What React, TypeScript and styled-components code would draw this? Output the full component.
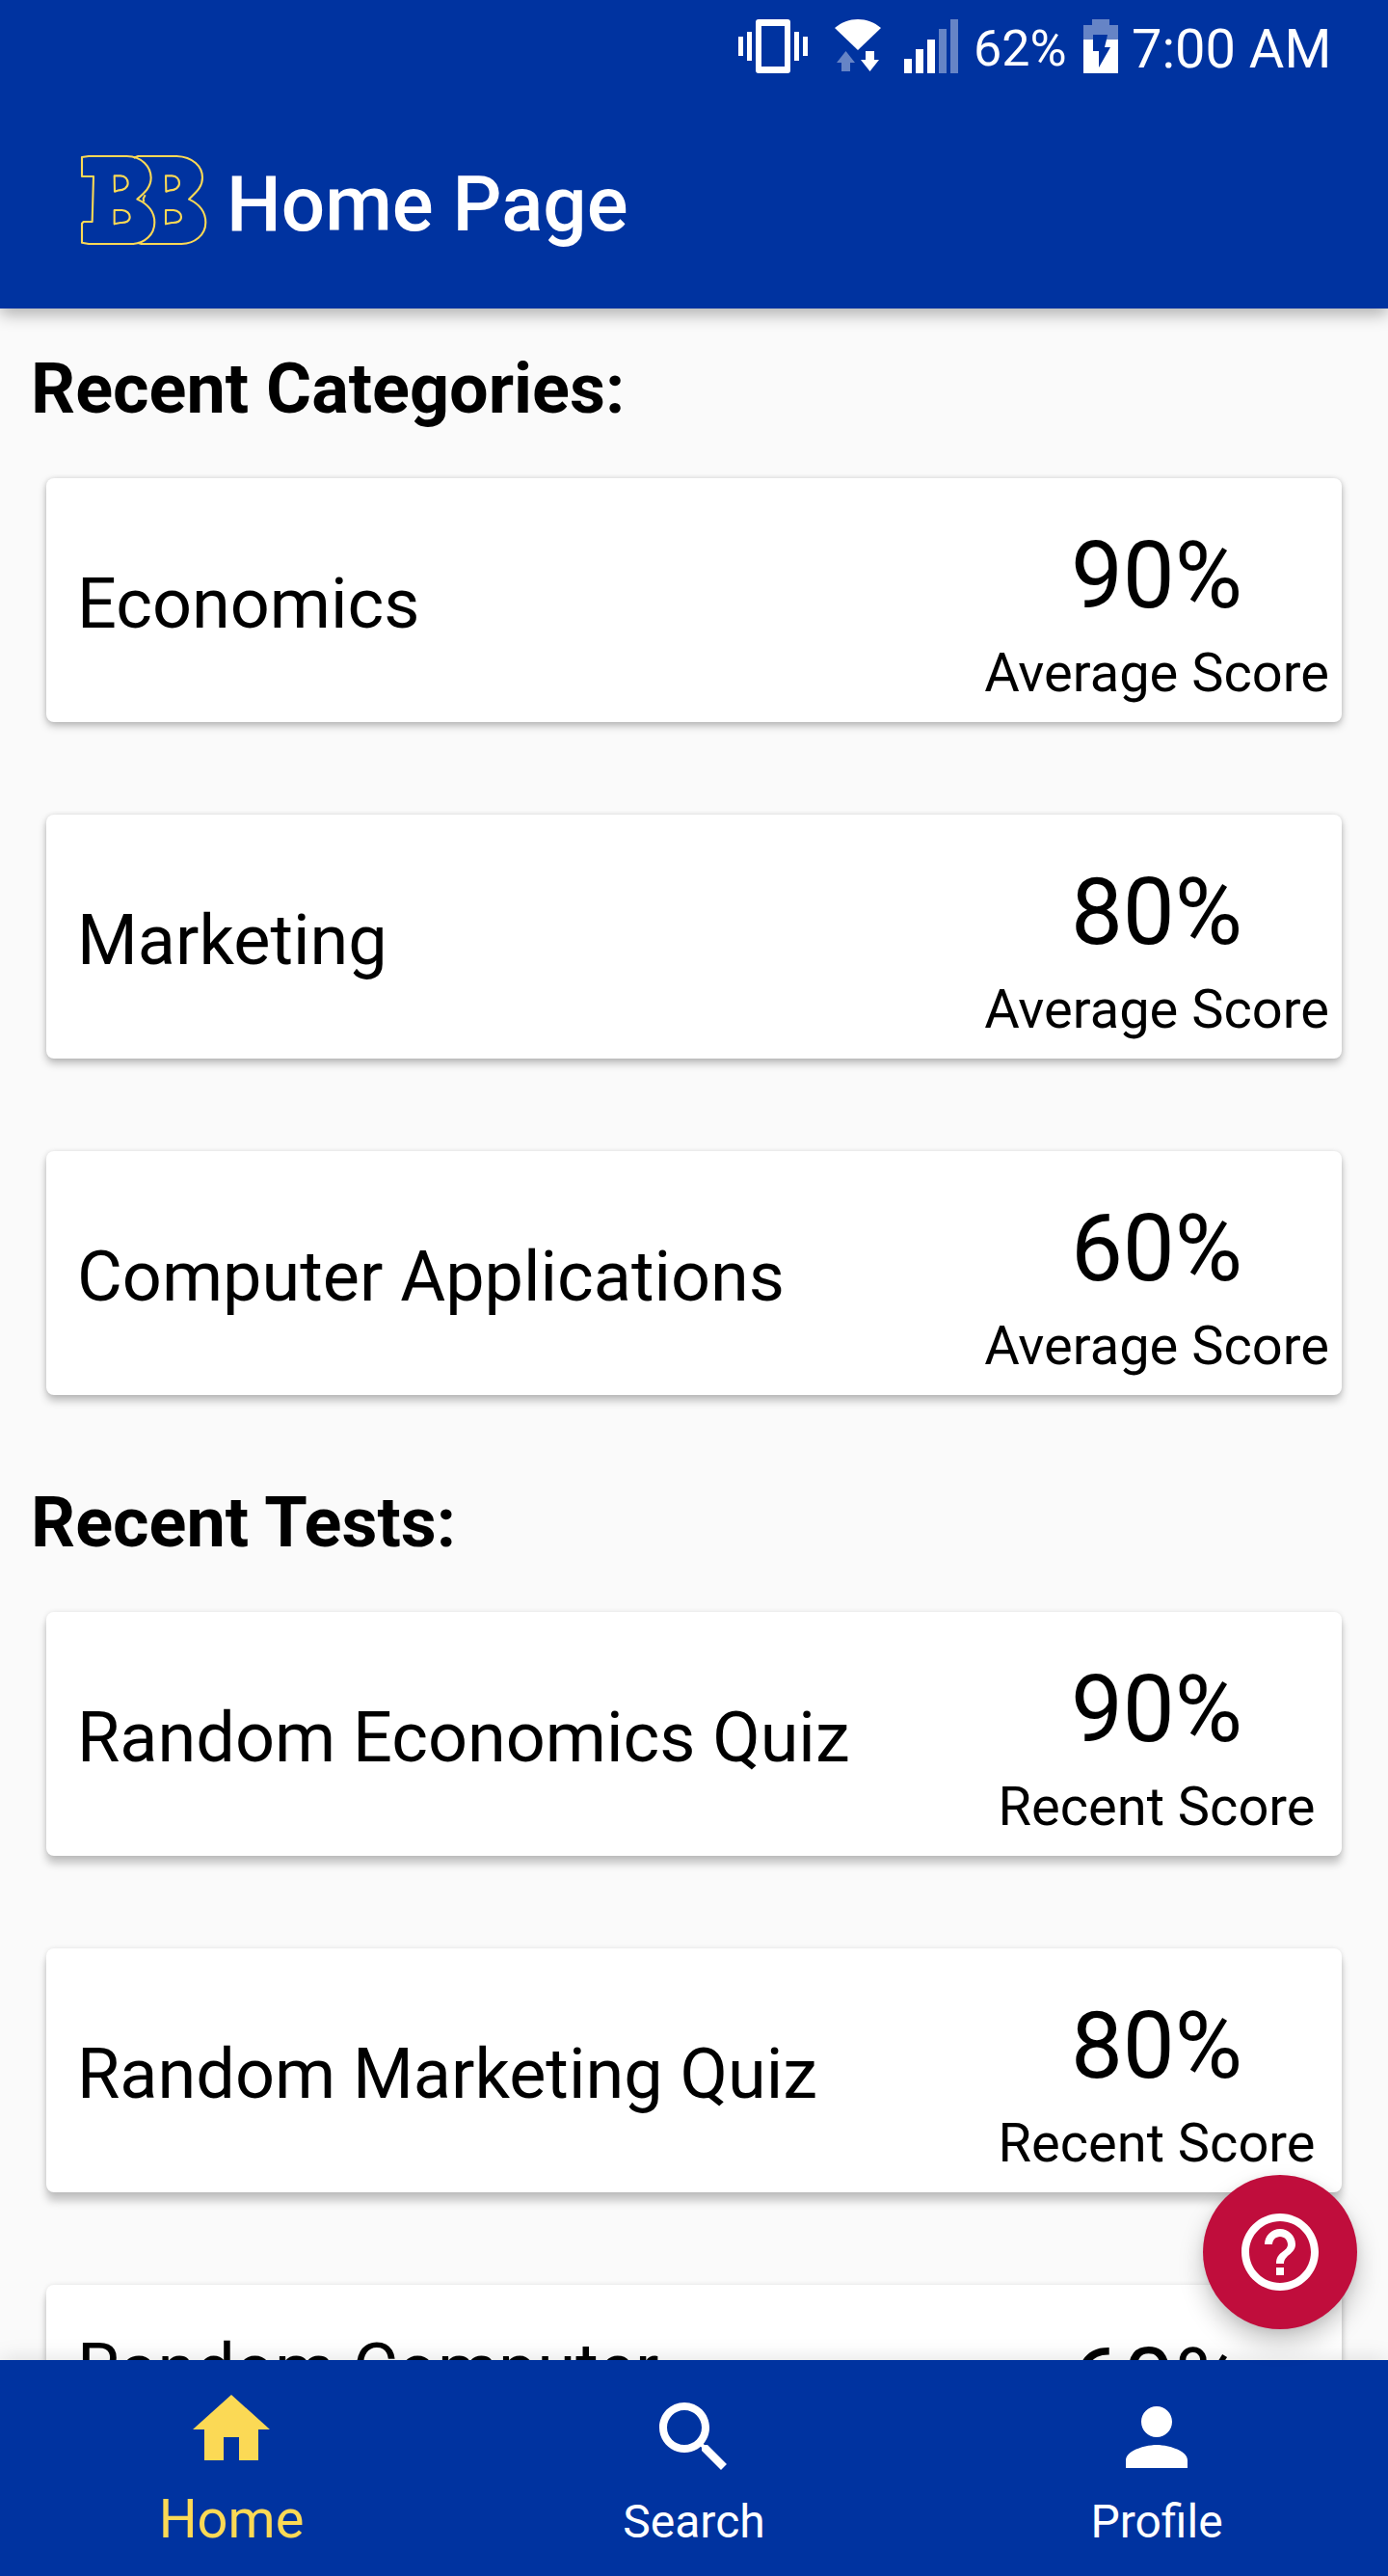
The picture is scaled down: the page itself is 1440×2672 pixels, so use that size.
import React from "react";
import styled, { createGlobalStyle } from "styled-components";

const BLUE = "#0033a0";
const GOLD = "#fbd955";

const GlobalStyle = createGlobalStyle`
  *, *::before, *::after { box-sizing: border-box; }
  body { margin: 0; background: #fafafa; }
`;

const Screen = styled.div`
  display: flex;
  flex-direction: column;
  width: 1440px;
  height: 2672px;
  overflow: hidden;
  background: #fafafa;
  color: #000;
  font-family: Roboto, "Liberation Sans", sans-serif;
`;

const Header = styled.header`
  flex: none;
  height: 320px;
  background: ${BLUE};
  color: #fff;
  box-shadow: 0 6px 16px rgba(0, 0, 0, 0.3);
  z-index: 1;
`;

const StatusBar = styled.div`
  display: flex;
  justify-content: flex-end;
  align-items: flex-start;
  height: 96px;
  padding-right: 60px;
`;

const StatusIcons = styled.svg`
  flex: none;
  display: block;
`;

const StatusText = styled.span<{ $size: number; $width: number; $indent?: number }>`
  flex: none;
  width: ${(p) => p.$width}px;
  padding-left: ${(p) => p.$indent ?? 0}px;
  font-size: ${(p) => p.$size}px;
  line-height: 102px;
  white-space: nowrap;
`;

const Toolbar = styled.div`
  display: flex;
  align-items: center;
  height: 224px;
  padding-left: 80px;
`;

const Title = styled.h1`
  margin: 0;
  padding: 8px 0 0 15px;
  font-size: 80px;
  font-weight: 500;
  line-height: 94px;
  white-space: nowrap;
`;

const Content = styled.main`
  flex: 1;
  min-height: 0;
  overflow: hidden;
`;

const Section = styled.section`
  & + & { padding-top: 1px; }
`;

const Heading = styled.h2`
  margin: 0;
  padding: 42px 32px 2px;
  font-size: 72px;
  font-weight: 700;
  line-height: 84px;
`;

const Card = styled.article<{ $drop: number; $shade: number }>`
  display: flex;
  justify-content: space-between;
  height: 253px;
  margin: 48px 48px 96px;
  padding: 0 14px 0 32px;
  border-radius: 8px;
  background: #fff;
  box-shadow: 0 ${(p) => p.$drop}px 8px rgba(0, 0, 0, ${(p) => p.$shade}), 0 0 5px rgba(0, 0, 0, 0.1);

  & + & { margin-top: 0; }
  &:last-child { margin-bottom: 48px; }
`;

const CardName = styled.div`
  align-self: center;
  width: 880px;
  padding-top: 8px;
  font-size: 72px;
  line-height: 86px;
`;

const Score = styled.div`
  display: flex;
  flex-direction: column;
  align-items: center;
  width: 356px;
  padding-top: 45px;
  white-space: nowrap;
`;

const Percent = styled.div`
  font-size: 96px;
  line-height: 113px;
`;

const ScoreLabel = styled.div`
  margin-top: 11px;
  font-size: 56px;
  line-height: 66px;
`;

const HelpButton = styled.button`
  position: absolute;
  left: 1248px;
  top: 2256px;
  display: flex;
  align-items: center;
  justify-content: center;
  width: 160px;
  height: 160px;
  padding: 0;
  border: 0;
  border-radius: 50%;
  background: #c00d3c;
  color: #fff;
  box-shadow: 0 14px 26px rgba(0, 0, 0, 0.22), 0 2px 10px rgba(0, 0, 0, 0.08);
`;

const NavBar = styled.nav`
  flex: none;
  position: relative;
  display: flex;
  height: 224px;
  background: ${BLUE};
  box-shadow: 0 0 22px rgba(0, 0, 0, 0.13);
`;

const NavItem = styled.a<{ $active?: boolean }>`
  flex: 1;
  display: flex;
  flex-direction: column;
  align-items: center;
  justify-content: space-between;
  padding: ${(p) => (p.$active ? 24 : 32)}px 0 ${(p) => (p.$active ? 26 : 28)}px;
  color: ${(p) => (p.$active ? GOLD : "#fff")};
  font-size: ${(p) => (p.$active ? 56 : 48)}px;
  line-height: ${(p) => (p.$active ? 66 : 56)}px;
`;

const Icon = ({ d }: { d: string }) => (
  <svg width="96" height="96" viewBox="0 0 24 24" fill="currentColor">
    <path d={d} />
  </svg>
);

const HOME = "M10 20v-6h4v6h5v-8h3L12 3 2 12h3v8z";
const SEARCH =
  "M15.5 14h-.79l-.28-.27C15.41 12.59 16 11.11 16 9.5 16 5.91 13.09 3 9.5 3S3 5.91 3 9.5 5.91 16 9.5 16c1.61 0 3.09-.59 4.23-1.57l.27.28v.79l5 4.99L20.49 19l-4.99-5zm-6 0C7.01 14 5 11.99 5 9.5S7.01 5 9.5 5 14 7.01 14 9.5 11.99 14 9.5 14z";
const PERSON =
  "M12 12c2.21 0 4-1.79 4-4s-1.79-4-4-4-4 1.79-4 4 1.79 4 4 4zm0 2c-2.67 0-8 1.34-8 4v2h16v-2c0-2.66-5.33-4-8-4z";
const HELP =
  "M11 18h2v-2h-2v2zm1-16C6.48 2 2 6.48 2 12s4.48 10 10 10 10-4.48 10-10S17.52 2 12 2zm0 18c-4.41 0-8-3.59-8-8s3.59-8 8-8 8 3.59 8 8-3.59 8-8 8zm0-14c-2.21 0-4 1.79-4 4h2c0-1.1.9-2 2-2s2 .9 2 2c0 2-3 1.75-3 5h2c0-2.25 3-2.5 3-5 0-2.21-1.79-4-4-4z";

const SignalIcons = () => (
  <StatusIcons width="250" height="96" viewBox="760 0 250 96" fill="#fff">
    <path d="M766 38h5v20h-5zM775 33h5v30h-5zM824 33h5v30h-5zM833 38h5v20h-5z" />
    <path fillRule="evenodd" d="M787 20h30a3 3 0 0 1 3 3v50a3 3 0 0 1-3 3h-30a3 3 0 0 1-3-3V23a3 3 0 0 1 3-3zM790 27v42h24V27z" />
    <path d="M866 29C880 17 900 17 914 29L890 52z" />
    <path opacity=".4" d="M877.5 53L887 65h-5v9h-9v-9h-5z" />
    <path d="M898 53h9v9h5L902.5 74 893 62h5z" />
    <path d="M938 61h8v15h-8zM950 51h8v25h-8zM962 41h8v35h-8z" />
    <path opacity=".4" d="M974 30h8v46h-8zM986 20h8v56h-8z" />
  </StatusIcons>
);

const BatteryIcon = () => (
  <StatusIcons width="50" height="96" viewBox="1122 0 50 96" fill="#fff">
    <path opacity=".4" d="M1133 20h18v6h9v15h-12l1-5h-15v5h-10V26h9z" />
    <path fillRule="evenodd" d="M1124 41h36v35h-36zM1134 41v12h6v17l12-21h-6l2-8z" />
  </StatusIcons>
);

const Logo = () => (
  <svg width="140" height="100" viewBox="60 54 420 300" fill="none" stroke={GOLD} strokeWidth="6.3" strokeLinejoin="round">
    <path d="M75 69L96 66H215C262 67 289 98 290 133C290 163 270 180 247 200C280 215 301 240 301 272C301 310 270 337 235 339H96L75 335V275L80 270H107L111 129H75Z" />
    <path d="M236 71L250 66H370C420 68 450 98 450 133C450 163 430 178 408 200C440 215 460 240 460 272C460 312 425 338 385 339H260L248 335M272 187L266 198L268 208" />
    <path id="hole" d="M176 127H195C210 128 218 138 218 150C218 163 205 172 190 172L177 176ZM176 234H200C215 235 224 245 224 255C224 268 212 274 195 273L176 277Z" />
    <use href="#hole" x="160" />
  </svg>
);

type Item = { name: string; percent: number; drop: number; shade: number };

const categories: Item[] = [
  { name: "Economics", percent: 90, drop: 4, shade: 0.26 },
  { name: "Marketing", percent: 80, drop: 5, shade: 0.25 },
  { name: "Computer Applications", percent: 60, drop: 6, shade: 0.24 },
];

const tests: Item[] = [
  { name: "Random Economics Quiz", percent: 90, drop: 8, shade: 0.22 },
  { name: "Random Marketing Quiz", percent: 80, drop: 9, shade: 0.21 },
  { name: "Random Computer Applications Quiz", percent: 60, drop: 9, shade: 0.21 },
];

const List = ({ title, label, items }: { title: string; label: string; items: Item[] }) => (
  <Section>
    <Heading>{title}</Heading>
    {items.map((item) => (
      <Card key={item.name} $drop={item.drop} $shade={item.shade}>
        <CardName>{item.name}</CardName>
        <Score>
          <Percent>{item.percent}%</Percent>
          <ScoreLabel>{label}</ScoreLabel>
        </Score>
      </Card>
    ))}
  </Section>
);

export default function App() {
  return (
    <Screen>
      <GlobalStyle />
      <Header>
        <StatusBar>
          <SignalIcons />
          <StatusText $size={52} $width={112}>62%</StatusText>
          <BatteryIcon />
          <StatusText $size={56} $width={208} $indent={2}>7:00 AM</StatusText>
        </StatusBar>
        <Toolbar>
          <Logo />
          <Title>Home Page</Title>
        </Toolbar>
      </Header>
      <Content>
        <List title="Recent Categories:" label="Average Score" items={categories} />
        <List title="Recent Tests:" label="Recent Score" items={tests} />
      </Content>
      <NavBar>
        <NavItem $active><Icon d={HOME} />Home</NavItem>
        <NavItem><Icon d={SEARCH} />Search</NavItem>
        <NavItem><Icon d={PERSON} />Profile</NavItem>
      </NavBar>
      <HelpButton aria-label="Help"><Icon d={HELP} /></HelpButton>
    </Screen>
  );
}
